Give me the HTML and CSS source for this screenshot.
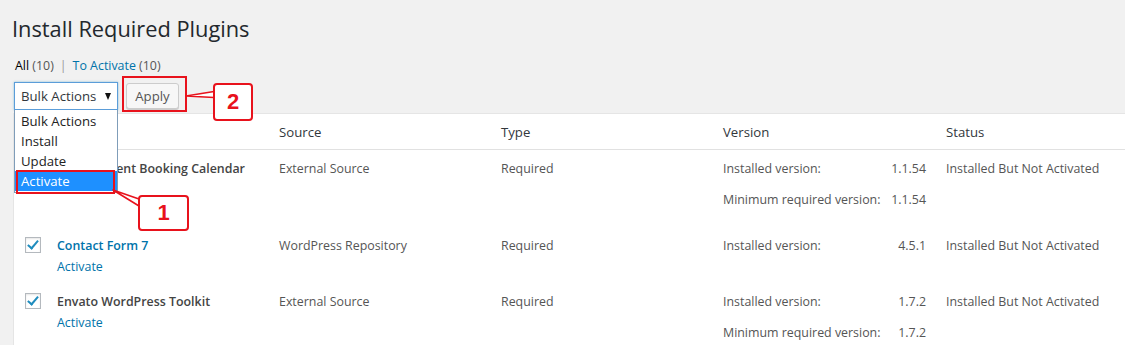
FILE: index.html
```html
<!DOCTYPE html>
<html lang="en">
<head>
<meta charset="utf-8">
<title>Install Required Plugins</title>
<link rel="stylesheet" href="styles.css">
</head>
<body>
<div class="wrap">
  <h1 class="title">Install Required Plugins</h1>
  <ul class="subsubsub">
    <li class="current">All <span class="count">(10)</span></li>
    <li class="sep">|</li>
    <li><span class="link">To Activate</span> <span class="count">(10)</span></li>
  </ul>
  <div class="tablenav">
    <div class="select">Bulk Actions<span class="arrow"></span></div>
    <button class="btn">Apply</button>
  </div>
  <div class="table">
    <div class="row head">
      <div class="cell check"><span class="cb"></span></div>
      <div class="cell">Plugin</div>
      <div class="cell">Source</div>
      <div class="cell">Type</div>
      <div class="cell">Version</div>
      <div class="cell">Status</div>
    </div>
    <div class="row">
      <div class="cell check"><span class="cb checked"></span></div>
      <div class="cell"><div class="pname">Appointment Booking Calendar</div><div class="actions">Activate</div></div>
      <div class="cell">External Source</div>
      <div class="cell">Required</div>
      <div class="cell">
        <div class="ver"><span>Installed version:</span><span>1.1.54</span></div>
        <div class="ver"><span>Minimum required version:</span><span>1.1.54</span></div>
      </div>
      <div class="cell">Installed But Not Activated</div>
    </div>
    <div class="row">
      <div class="cell check"><span class="cb checked"></span></div>
      <div class="cell"><div class="pname link">Contact Form 7</div><div class="actions">Activate</div></div>
      <div class="cell">WordPress Repository</div>
      <div class="cell">Required</div>
      <div class="cell">
        <div class="ver"><span>Installed version:</span><span>4.5.1</span></div>
      </div>
      <div class="cell">Installed But Not Activated</div>
    </div>
    <div class="row">
      <div class="cell check"><span class="cb checked"></span></div>
      <div class="cell"><div class="pname">Envato WordPress Toolkit</div><div class="actions">Activate</div></div>
      <div class="cell">External Source</div>
      <div class="cell">Required</div>
      <div class="cell">
        <div class="ver"><span>Installed version:</span><span>1.7.2</span></div>
        <div class="ver"><span>Minimum required version:</span><span>1.7.2</span></div>
      </div>
      <div class="cell">Installed But Not Activated</div>
    </div>
  </div>
</div>

<ul class="dropdown">
  <li>Bulk Actions</li>
  <li>Install</li>
  <li>Update</li>
  <li class="selected">Activate</li>
</ul>

<div class="mark mark-apply"></div>
<div class="mark mark-activate"></div>
<svg class="pointers" width="1125" height="345" viewBox="0 0 1125 345">
  <polygon points="186,96 214,91.5 214,97.5" fill="#fff" stroke="#e8121c" stroke-width="1.6" stroke-linejoin="round"/>
  <polygon points="113,190 139,199 139,206" fill="#fff" stroke="#e8121c" stroke-width="1.6" stroke-linejoin="round"/>
</svg>
<div class="callout callout-2">2</div>
<div class="callout callout-1">1</div>
</body>
</html>
```
FILE: styles.css
```css
html, body {
  margin: 0;
  padding: 0;
}
body {
  background: #f1f1f1;
  font-family: "Open Sans", "Noto Sans", sans-serif;
  font-size: 12.4px;
  color: #555;
  width: 1125px;
  height: 345px;
  overflow: hidden;
  position: relative;
}
.wrap {
  padding-left: 13px;
}
.title {
  margin: 14px 0 0 -1px;
  font-size: 21.8px;
  font-weight: 400;
  line-height: 29px;
  color: #23282d;
}
.subsubsub {
  list-style: none;
  margin: 13px 0 0 2px;
  padding: 0;
  display: flex;
  gap: 5px;
  line-height: 20px;
  font-size: 12.4px;
}
.subsubsub .current {
  color: #000;
}
.subsubsub .count {
  color: #555;
}
.subsubsub .sep {
  color: #999;
  padding: 0 1px;
}
.link {
  color: #0073aa;
}
.tablenav {
  margin-top: 6px;
  display: flex;
  align-items: flex-start;
  gap: 8px;
}
.select {
  box-sizing: border-box;
  width: 104px;
  height: 28px;
  margin-left: 1px;
  background: #fff;
  border: 1px solid #5b9dd9;
  box-shadow: 0 0 2px rgba(30, 140, 190, 0.5);
  color: #32373c;
  font-size: 13.2px;
  line-height: 26px;
  padding-left: 6px;
  position: relative;
}
.arrow {
  position: absolute;
  right: 6px;
  top: 10px;
  width: 0;
  height: 0;
  border-left: 3.5px solid transparent;
  border-right: 3.5px solid transparent;
  border-top: 7px solid #111;
}
.btn {
  box-sizing: border-box;
  margin-top: 1px;
  height: 26px;
  width: 53px;
  padding: 0;
  background: #f7f7f7;
  border: 1px solid #ccc;
  border-radius: 3px;
  box-shadow: 0 1px 0 #ccc;
  color: #555;
  font-family: "Open Sans", "Noto Sans", sans-serif;
  font-size: 13.2px;
  line-height: 24px;
}
.table {
  margin-top: 3px;
  width: 1130px;
  background: #fff;
  border: 1px solid #e5e5e5;
  box-sizing: border-box;
}
.row {
  display: grid;
  grid-template-columns: 33px 222px 222px 222px 223px 1fr;
}
.cell {
  padding: 9px 10px 7px;
  line-height: 20px;
}
.cell.check {
  padding: 10px 0 0 11px;
}
.head {
  border-bottom: 1px solid #e1e1e1;
  color: #32373c;
  font-size: 13.2px;
}
.head .cell:not(.check) {
  padding-top: 8px;
  padding-bottom: 7px;
}
.head .cell.check {
  padding-top: 10px;
}
.cb {
  display: block;
  box-sizing: border-box;
  width: 16px;
  height: 16px;
  border: 1px solid #b4b9be;
  background: #fff;
  box-shadow: inset 0 1px 2px rgba(0, 0, 0, 0.1);
  position: relative;
}
.cb.checked::after {
  content: "";
  position: absolute;
  left: 4px;
  top: 0px;
  width: 4px;
  height: 9px;
  border-right: 2.5px solid #1e8cbe;
  border-bottom: 2.5px solid #1e8cbe;
  transform: rotate(40deg);
}
.pname {
  font-weight: 600;
  color: #444;
}
.pname.link {
  color: #0073aa;
}
.actions {
  color: #0073aa;
  padding-top: 1px;
  line-height: 19px;
}
.ver {
  display: flex;
  justify-content: space-between;
  padding-bottom: 11px;
}
.ver:last-child {
  padding-bottom: 10px;
}
.dropdown {
  position: absolute;
  left: 14px;
  top: 110px;
  width: 104px;
  height: 83px;
  box-sizing: border-box;
  margin: 0;
  padding: 0;
  list-style: none;
  background: #fff;
  border: 1px solid #7f9db9;
  border-top: none;
  font-size: 13.2px;
  color: #222;
}
.dropdown li {
  height: 20px;
  line-height: 20px;
  padding-left: 6px;
}
.dropdown li:first-child {
  margin-top: 1px;
}
.dropdown .selected {
  background: #1e90ff;
  color: #fff;
}
.mark {
  position: absolute;
  border: 2px solid #e8121c;
  box-sizing: border-box;
}
.mark-apply {
  left: 122px;
  top: 76px;
  width: 65px;
  height: 36px;
}
.mark-activate {
  left: 16px;
  top: 170px;
  width: 99px;
  height: 24px;
}
.pointers {
  position: absolute;
  left: 0;
  top: 0;
}
.callout {
  position: absolute;
  box-sizing: border-box;
  background: #fff;
  border: 2px solid #e8121c;
  border-radius: 4px;
  color: #e8121c;
  font-family: "Liberation Sans", Arial, sans-serif;
  font-weight: 700;
  font-size: 22px;
  display: flex;
  align-items: center;
  justify-content: center;
}
.callout-2 {
  left: 213px;
  top: 83px;
  width: 40px;
  height: 38px;
}
.callout-1 {
  left: 138px;
  top: 195px;
  width: 51px;
  height: 36px;
}
```
